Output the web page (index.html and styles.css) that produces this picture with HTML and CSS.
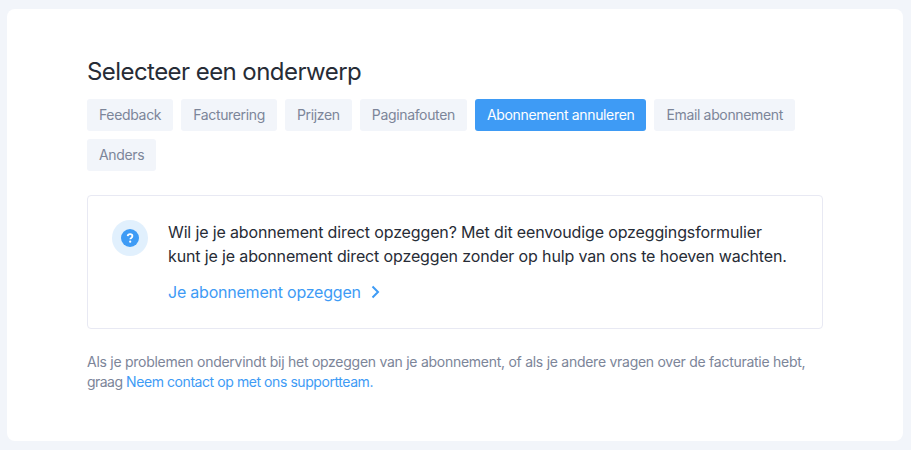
FILE: index.html
```html
<!DOCTYPE html>
<html lang="nl">
<head>
<meta charset="utf-8">
<title>Selecteer een onderwerp</title>
<link rel="stylesheet" href="styles.css">
</head>
<body>
<main class="card">
  <h1 class="title">Selecteer een onderwerp</h1>
  <div class="chips">
    <span class="chip">Feedback</span>
    <span class="chip">Facturering</span>
    <span class="chip">Prijzen</span>
    <span class="chip">Paginafouten</span>
    <span class="chip chip-active">Abonnement annuleren</span>
    <span class="chip">Email abonnement</span>
    <span class="chip">Anders</span>
  </div>
  <section class="notice">
    <div class="icon-ring">
      <svg class="icon" viewBox="0 0 18 18" width="18" height="18" aria-hidden="true">
        <circle cx="9" cy="9" r="9" fill="#3e9bf5"/>
        <path d="M6.700 7.100C6.800 5.900 7.700 5.100 9.100 5.100c1.400 0 2.300.8 2.300 1.900 0 .9-.5 1.400-1.200 1.900-.6.4-.9.7-.9 1.400" fill="none" stroke="#fff" stroke-width="1.800"/>
        <circle cx="9.200" cy="12.700" r="1.100" fill="#fff"/>
      </svg>
    </div>
    <div class="notice-body">
      <p class="notice-text">Wil je je abonnement direct opzeggen? Met dit eenvoudige opzeggingsformulier kunt je je abonnement direct opzeggen zonder op hulp van ons te hoeven wachten.</p>
      <a class="notice-link" href="#">Je abonnement opzeggen
        <svg class="chevron" viewBox="0 0 9 14" width="9" height="14" aria-hidden="true"><path d="M1.500 1.500 7 7l-5.500 5.500" fill="none" stroke="#3e9bf5" stroke-width="2"/></svg>
      </a>
    </div>
  </section>
  <p class="foot">Als je problemen ondervindt bij het opzeggen van je abonnement, of als je andere vragen over de facturatie hebt, <span class="foot-lead">graag</span> <a href="#">Neem contact op met ons supportteam.</a></p>
</main>
</body>
</html>
```

FILE: styles.css
```css
* { box-sizing: border-box; }
html, body { height: 100%; }
body {
  margin: 0;
  padding: 9px 8px 9px 7px;
  background: #f2f5fa;
  font-family: "Inter", "Liberation Sans", sans-serif;
  overflow: hidden;
}
.card {
  height: 432px;
  background: #fff;
  border-radius: 8px;
  padding: 46px 80px 0;
}
.title {
  margin: 0 0 11px;
  font-size: 24px;
  line-height: 33px;
  font-weight: 400;
  letter-spacing: -0.56px;
  color: #272c36;
}
.chips { display: flex; flex-wrap: wrap; gap: 8px; }
.chip {
  height: 32px;
  padding: 0 12px;
  border-radius: 3px;
  background: #f2f5fa;
  color: #7c8599;
  font-size: 14px;
  line-height: 32px;
  letter-spacing: -0.34px;
}
.chip-active { background: #3e9bf5; color: #fff; }
.notice {
  display: flex;
  margin-top: 24px;
  height: 134px;
  padding: 24px;
  border: 1px solid #e8e9f3;
  border-radius: 4px;
  gap: 20px;
}
.icon-ring {
  flex: none;
  width: 36px;
  height: 36px;
  border-radius: 50%;
  background: #e1f0fd;
  display: flex;
  align-items: center;
  justify-content: center;
}
.icon { display: block; }
.notice-body { flex: 1; }
.notice-text {
  margin: 0;
  max-width: 625px;
  font-size: 16px;
  line-height: 24px;
  letter-spacing: -0.14px;
  color: #272c36;
}
.notice-link {
  display: flex;
  align-items: center;
  gap: 10px;
  margin-top: 12px;
  font-size: 16px;
  line-height: 24px;
  letter-spacing: -0.22px;
  color: #3e9bf5;
  text-decoration: none;
}
.foot {
  margin: 23px 0 0;
  font-size: 14px;
  line-height: 20px;
  letter-spacing: -0.27px;
  color: #7c8599;
}
.foot-lead { letter-spacing: -0.55px; }
.foot a { color: #3e9bf5; text-decoration: none; letter-spacing: -0.43px; }
```
